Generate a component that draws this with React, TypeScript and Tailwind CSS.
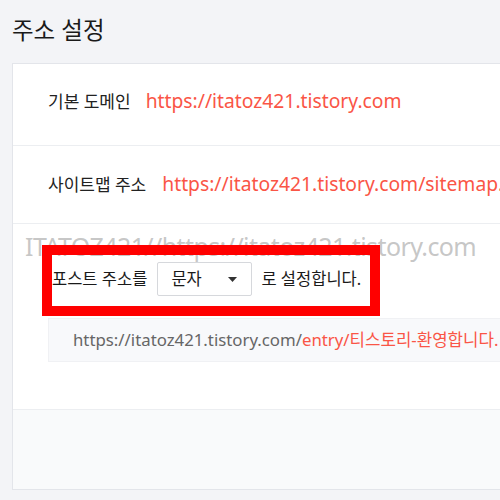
export default function App() {
  const font = { fontFamily: '"Noto Sans", "Noto Sans CJK KR", sans-serif' };
  return (
    <div className="relative w-[500px] h-[500px] overflow-hidden bg-[#f3f4f7]" style={font}>
      <h1 className="pl-[12px] pt-[13px] h-[63px] text-[23.5px] leading-[34px] text-[#1a1a1a]">주소 설정</h1>

      <div className="ml-[12px] w-[540px] h-[427px] bg-white border border-[#e3e5ea] flex flex-col">
        {/* 기본 도메인 */}
        <div className="h-[82px] shrink-0 flex items-center pl-[35px] pb-[6px] gap-[15px] border-b border-[#eceef1]">
          <span className="text-[17px] text-[#222]">기본 도메인</span>
          <span className="text-[19.3px] text-[#fa5546]">https://itatoz421.tistory.com</span>
        </div>

        {/* 사이트맵 */}
        <div className="h-[78px] shrink-0 flex items-center pl-[35px] gap-[16px] border-b border-[#eceef1]">
          <span className="text-[17px] text-[#222] whitespace-nowrap">사이트맵 주소</span>
          <span className="text-[19.3px] text-[#fa5546] whitespace-nowrap">https://itatoz421.tistory.com/sitemap.xml</span>
        </div>

        {/* 포스트 주소 */}
        <div className="h-[186px] shrink-0 pl-[35px] pt-[38px] border-b border-[#eceef1]">
          <div className="flex items-center h-[34px] pl-[4px]">
            <span className="text-[16.5px] text-[#1a1a1a]">포스트 주소를</span>
            <div className="ml-[10px] w-[95px] h-[34px] border border-[#d6d8dc] rounded-[2px] bg-white flex items-center justify-between pl-[13px] pr-[14px]">
              <span className="text-[16.5px] text-[#1a1a1a]">문자</span>
              <svg width="9" height="5" viewBox="0 0 9 5">
                <path d="M0 0h9L4.5 5z" fill="#333" />
              </svg>
            </div>
            <span className="ml-[9px] text-[16.5px] text-[#1a1a1a]">로 설정합니다.</span>
          </div>
          <div className="mt-[22px] h-[44px] bg-[#f8f9fb] border border-[#f0f1f4] flex items-center pl-[24px] whitespace-nowrap text-[16.8px]">
            <span className="text-[#666]">https://itatoz421.tistory.com/</span>
            <span className="text-[#fa5546]">entry/티스토리-환영합니다.</span>
          </div>
        </div>

        {/* footer */}
        <div className="flex-1 bg-[#f9fafb]" />
      </div>

      {/* watermark */}
      <div className="absolute left-[25px] top-[228px] text-[25px] leading-[36px] tracking-[-0.6px] text-[#b8b8b8]/80 whitespace-nowrap pointer-events-none">
        ITATOZ421//https://itatoz421.tistory.com
      </div>

      {/* highlight box */}
      <div className="absolute left-[42px] top-[245px] w-[338px] h-[71px] border-[10px] border-[#ff0000] pointer-events-none" />
    </div>
  );
}
